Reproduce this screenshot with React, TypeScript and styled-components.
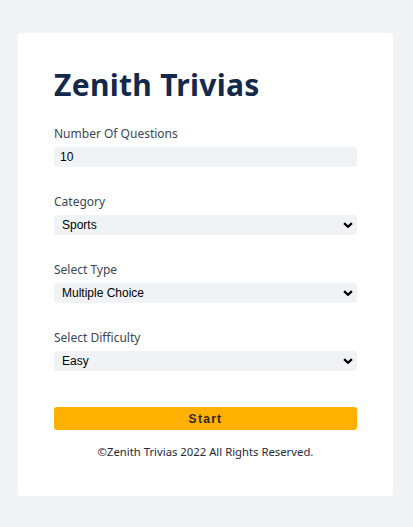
import React from "react";
import styled, { createGlobalStyle } from "styled-components";

const Global = createGlobalStyle`
  html, body { margin: 0; padding: 0; background: #f0f4f7; }
  body { font-family: "Noto Sans", "Open Sans", sans-serif; }
  * { box-sizing: border-box; }
`;

const Page = styled.div`
  min-height: 527px;
  padding: 33px 20px 31px 18px;
  display: flex;
  align-items: flex-start;
`;

const Card = styled.form`
  width: 375px;
  height: 463px;
  background: #ffffff;
  border-radius: 4px;
  padding: 32px 36px 0 36px;
  display: flex;
  flex-direction: column;
`;

const Title = styled.h1`
  margin: 0 0 21px 0;
  font-family: "Noto Sans", sans-serif;
  font-weight: 700;
  font-size: 30px;
  line-height: 40px;
  letter-spacing: 0.3px;
  color: #13294b;
`;

const Field = styled.div`
  display: flex;
  flex-direction: column;
  margin-bottom: 27px;
`;

const Label = styled.label`
  font-family: "Noto Sans", sans-serif;
  font-size: 12px;
  line-height: 16px;
  color: #3b4656;
  margin-bottom: 5px;
`;

const Input = styled.input`
  height: 20px;
  width: 100%;
  border: none;
  outline: none;
  border-radius: 3px;
  background: #f0f3f6;
  padding: 0 6px;
  font-family: "Liberation Sans", Arial, sans-serif;
  font-size: 12px;
  color: #000;
`;

const SelectWrap = styled.div`
  position: relative;
  height: 20px;
`;

const Select = styled.select`
  display: block;
  appearance: none;
  -webkit-appearance: none;
  height: 20px;
  width: 100%;
  border: none;
  outline: none;
  border-radius: 3px;
  background: #f0f3f6;
  padding: 0 24px 0 8px;
  font-family: "Liberation Sans", Arial, sans-serif;
  font-size: 12px;
  color: #000;
`;

const Chevron = styled.svg`
  position: absolute;
  right: 4px;
  top: 7px;
  width: 10px;
  height: 6px;
  display: block;
  pointer-events: none;
`;

const StartButton = styled.button`
  margin-top: 9px;
  height: 23px;
  width: 100%;
  border: none;
  border-radius: 3px;
  background: #ffb000;
  font-family: "Liberation Sans", Arial, sans-serif;
  font-weight: 700;
  font-size: 12px;
  letter-spacing: 1.3px;
  color: #2b2b2b;
  padding: 0;
`;

const Footer = styled.p`
  margin: 14px 0 0 0;
  text-align: center;
  font-family: "Noto Sans", sans-serif;
  font-size: 11.3px;
  line-height: 16px;
  color: #1f2a3a;
`;

const Arrow = () => (
  <Chevron viewBox="0 0 10 6">
    <path d="M1.1 1.1 L5 4.8 L8.9 1.1" fill="none" stroke="#000" strokeWidth="2.2" />
  </Chevron>
);

const Dropdown: React.FC<{ options: string[] }> = ({ options }) => (
  <SelectWrap>
    <Select defaultValue={options[0]}>
      {options.map((o) => (
        <option key={o}>{o}</option>
      ))}
    </Select>
    <Arrow />
  </SelectWrap>
);

export default function App() {
  return (
    <>
      <Global />
      <Page>
        <Card onSubmit={(e) => e.preventDefault()}>
          <Title>Zenith Trivias</Title>
          <Field>
            <Label>Number Of Questions</Label>
            <Input type="text" defaultValue="10" />
          </Field>
          <Field>
            <Label>Category</Label>
            <Dropdown options={["Sports", "History", "Science"]} />
          </Field>
          <Field>
            <Label>Select Type</Label>
            <Dropdown options={["Multiple Choice", "True / False"]} />
          </Field>
          <Field>
            <Label>Select Difficulty</Label>
            <Dropdown options={["Easy", "Medium", "Hard"]} />
          </Field>
          <StartButton type="submit">Start</StartButton>
          <Footer>©Zenith Trivias 2022 All Rights Reserved.</Footer>
        </Card>
      </Page>
    </>
  );
}
